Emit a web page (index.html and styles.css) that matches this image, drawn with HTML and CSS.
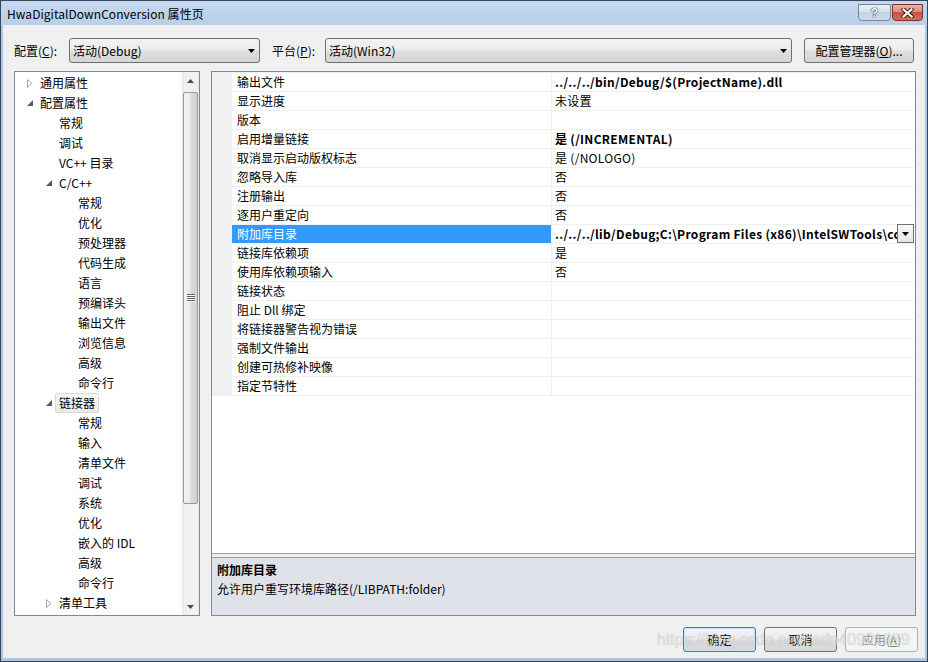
FILE: index.html
```html
<!DOCTYPE html>
<html lang="zh-CN">
<head>
<meta charset="utf-8">
<title>HwaDigitalDownConversion 属性页</title>
<link rel="stylesheet" href="styles.css">
</head>
<body>
<div class="window">
  <div class="titlebar">
    <span class="title">HwaDigitalDownConversion 属性页</span>
    <div class="tbtns">
      <div class="tb help"><span>?</span></div>
      <div class="tb close">
        <svg width="13" height="10" viewBox="0 0 13 10"><path d="M2.5 1.5 L10.5 8.5 M10.5 1.5 L2.5 8.5" stroke="#4b1c16" stroke-width="4.2" stroke-linecap="square" fill="none"/><path d="M2.5 1.5 L10.5 8.5 M10.5 1.5 L2.5 8.5" stroke="#ffffff" stroke-width="2.2" stroke-linecap="square" fill="none"/></svg>
      </div>
    </div>
  </div>
  <div class="client">
    <div class="toolbar">
      <span class="lbl lbl1">配置(<u>C</u>):</span>
      <div class="combo c1"><span class="ctext">活动(Debug)</span><svg class="dd" width="7" height="4" viewBox="0 0 7 4"><path d="M0 0H7L3.5 4Z" fill="#000"/></svg></div>
      <span class="lbl lbl2">平台(<u>P</u>):</span>
      <div class="combo c2"><span class="ctext">活动(Win32)</span><svg class="dd" width="7" height="4" viewBox="0 0 7 4"><path d="M0 0H7L3.5 4Z" fill="#000"/></svg></div>
      <div class="btn cfg">配置管理器(<u>O</u>)...</div>
    </div>
    <div class="main">
      <div class="tree">
        <div class="tree-items">
          <div class="ti l0"><span class="tg"><svg width="6" height="9" viewBox="0 0 6 9"><path d="M0.5 0.5 L5 4.5 L0.5 8.5 Z" fill="#fff" stroke="#a6a6a6"/></svg></span><span class="tx">通用属性</span></div>
          <div class="ti l0"><span class="tg"><svg width="6" height="6" viewBox="0 0 6 6"><path d="M6 0 L6 6 L0 6 Z" fill="#595959"/></svg></span><span class="tx">配置属性</span></div>
          <div class="ti l1"><span class="tg"></span><span class="tx">常规</span></div>
          <div class="ti l1"><span class="tg"></span><span class="tx">调试</span></div>
          <div class="ti l1"><span class="tg"></span><span class="tx">VC++ 目录</span></div>
          <div class="ti l1"><span class="tg"><svg width="6" height="6" viewBox="0 0 6 6"><path d="M6 0 L6 6 L0 6 Z" fill="#595959"/></svg></span><span class="tx">C/C++</span></div>
          <div class="ti l2"><span class="tg"></span><span class="tx">常规</span></div>
          <div class="ti l2"><span class="tg"></span><span class="tx">优化</span></div>
          <div class="ti l2"><span class="tg"></span><span class="tx">预处理器</span></div>
          <div class="ti l2"><span class="tg"></span><span class="tx">代码生成</span></div>
          <div class="ti l2"><span class="tg"></span><span class="tx">语言</span></div>
          <div class="ti l2"><span class="tg"></span><span class="tx">预编译头</span></div>
          <div class="ti l2"><span class="tg"></span><span class="tx">输出文件</span></div>
          <div class="ti l2"><span class="tg"></span><span class="tx">浏览信息</span></div>
          <div class="ti l2"><span class="tg"></span><span class="tx">高级</span></div>
          <div class="ti l2"><span class="tg"></span><span class="tx">命令行</span></div>
          <div class="ti l1"><span class="tg"><svg width="6" height="6" viewBox="0 0 6 6"><path d="M6 0 L6 6 L0 6 Z" fill="#595959"/></svg></span><span class="tx sel">链接器</span></div>
          <div class="ti l2"><span class="tg"></span><span class="tx">常规</span></div>
          <div class="ti l2"><span class="tg"></span><span class="tx">输入</span></div>
          <div class="ti l2"><span class="tg"></span><span class="tx">清单文件</span></div>
          <div class="ti l2"><span class="tg"></span><span class="tx">调试</span></div>
          <div class="ti l2"><span class="tg"></span><span class="tx">系统</span></div>
          <div class="ti l2"><span class="tg"></span><span class="tx">优化</span></div>
          <div class="ti l2"><span class="tg"></span><span class="tx">嵌入的 IDL</span></div>
          <div class="ti l2"><span class="tg"></span><span class="tx">高级</span></div>
          <div class="ti l2"><span class="tg"></span><span class="tx">命令行</span></div>
          <div class="ti l1"><span class="tg"><svg width="6" height="9" viewBox="0 0 6 9"><path d="M0.5 0.5 L5 4.5 L0.5 8.5 Z" fill="#fff" stroke="#a6a6a6"/></svg></span><span class="tx">清单工具</span></div>
        </div>
        <div class="vscroll">
          <div class="sb-btn"><svg width="7" height="4" viewBox="0 0 7 4"><path d="M0 4H7L3.5 0Z" fill="#4a4a4a"/></svg></div>
          <div class="sb-track">
            <div class="thumb">
              <svg width="8" height="8" viewBox="0 0 8 8"><path d="M0 0.5H8M0 2.5H8M0 4.5H8M0 6.5H8" stroke="#5f5f5f" stroke-width="1"/><path d="M0 1.5H8M0 3.5H8M0 5.5H8M0 7.5H8" stroke="#ffffff" stroke-width="1"/></svg>
            </div>
          </div>
          <div class="sb-btn"><svg width="7" height="4" viewBox="0 0 7 4"><path d="M0 0H7L3.5 4Z" fill="#4a4a4a"/></svg></div>
        </div>
      </div>
      <div class="props">
        <div class="grid">
          <div class="rows">
            <div class="row"><div class="gut"></div><div class="k">输出文件</div><div class="v b">../../../bin/Debug/$(ProjectName).dll</div></div>
            <div class="row"><div class="gut"></div><div class="k">显示进度</div><div class="v">未设置</div></div>
            <div class="row"><div class="gut"></div><div class="k">版本</div><div class="v"></div></div>
            <div class="row"><div class="gut"></div><div class="k">启用增量链接</div><div class="v b">是 (/INCREMENTAL)</div></div>
            <div class="row"><div class="gut"></div><div class="k">取消显示启动版权标志</div><div class="v">是 (/NOLOGO)</div></div>
            <div class="row"><div class="gut"></div><div class="k">忽略导入库</div><div class="v">否</div></div>
            <div class="row"><div class="gut"></div><div class="k">注册输出</div><div class="v">否</div></div>
            <div class="row"><div class="gut"></div><div class="k">逐用户重定向</div><div class="v">否</div></div>
            <div class="row selrow"><div class="gut"></div><div class="k">附加库目录</div><div class="v b vsel"><span class="vt">../../../lib/Debug;C:\Program Files (x86)\IntelSWTools\compilers_and_libraries\windows\ipp\lib\ia32</span><span class="vdd"><svg width="7" height="4" viewBox="0 0 7 4"><path d="M0 0H7L3.5 4Z" fill="#000"/></svg></span></div></div>
            <div class="row"><div class="gut"></div><div class="k">链接库依赖项</div><div class="v">是</div></div>
            <div class="row"><div class="gut"></div><div class="k">使用库依赖项输入</div><div class="v">否</div></div>
            <div class="row"><div class="gut"></div><div class="k">链接状态</div><div class="v"></div></div>
            <div class="row"><div class="gut"></div><div class="k">阻止 Dll 绑定</div><div class="v"></div></div>
            <div class="row"><div class="gut"></div><div class="k">将链接器警告视为错误</div><div class="v"></div></div>
            <div class="row"><div class="gut"></div><div class="k">强制文件输出</div><div class="v"></div></div>
            <div class="row"><div class="gut"></div><div class="k">创建可热修补映像</div><div class="v"></div></div>
            <div class="row"><div class="gut"></div><div class="k">指定节特性</div><div class="v"></div></div>
          </div>
        </div>
        <div class="splitter"></div>
        <div class="desc">
          <div class="dt">附加库目录</div>
          <div class="dd-text">允许用户重写环境库路径(/LIBPATH:folder)</div>
        </div>
      </div>
    </div>
    <div class="footer">
      <div class="btn fb ok">确定</div>
      <div class="btn fb">取消</div>
      <div class="btn fb dis">应用(<u>A</u>)</div>
    </div>
  </div>
  <div class="watermark">https://blog.csdn.net/csdn40991989</div>
</div>
</body>
</html>
```

FILE: styles.css
```css
html, body {
  margin: 0;
  padding: 0;
  background: #ffffff;
}
body {
  font-family: "Noto Sans CJK SC", "Noto Sans", sans-serif;
  font-size: 12px;
  color: #000;
}
.window {
  position: relative;
  width: 928px;
  height: 662px;
  box-sizing: border-box;
  border: 1px solid #37475a;
  background: #a9c7e8;
  padding: 0 2px 3px 2px;
  display: flex;
  flex-direction: column;
}
.titlebar {
  height: 24px;
  margin: 0 -2px;
  padding: 0 2px;
  display: flex;
  align-items: flex-start;
  background: linear-gradient(#c6d9f0, #bcd2ec 60%, #b9cfea);
}
.title {
  padding-left: 4px;
  padding-top: 4px;
  line-height: 17px;
  white-space: nowrap;
  letter-spacing: 0.05px;
  color: #000;
}
.tbtns {
  margin-left: auto;
  margin-right: 2px;
  margin-top: 3px;
  display: flex;
  gap: 1px;
}
.tb {
  height: 17px;
  box-sizing: border-box;
  display: flex;
  align-items: center;
  justify-content: center;
  border-radius: 0 0 4px 4px;
}
.help {
  width: 33px;
  border: 1px solid #75869b;
  background: linear-gradient(#e7eef7, #d6e2f0 45%, #c3d3e6 50%, #cddbeb);
}
.help span {
  font-family: "Liberation Sans", sans-serif;
  font-weight: bold;
  font-size: 13px;
  line-height: 13px;
  color: #ffffff;
  text-shadow: 0 0 1px #2a3340, 0 0 1px #2a3340, 0 0 1px #2a3340;
}
.close {
  width: 31px;
  border: 1px solid #7b3128;
  background: linear-gradient(#ebb3a9, #da8a7b 45%, #c7533f 50%, #d07060);
}
.client {
  flex: 1;
  background: #f0f0f0;
  padding: 13px 9px 6px 11px;
  display: flex;
  flex-direction: column;
  min-height: 0;
}
.toolbar {
  height: 25px;
  display: flex;
  align-items: center;
}
.lbl {
  white-space: nowrap;
}
.lbl1 { width: 55px; }
.lbl2 { width: 53px; margin-left: 12px; }
.combo {
  height: 25px;
  box-sizing: border-box;
  border: 1px solid #707070;
  border-radius: 3px;
  background: linear-gradient(#f3f3f3, #ececec 48%, #dedede 52%, #d6d6d6);
  display: flex;
  align-items: center;
  padding: 0 4px 0 3px;
}
.c1 { width: 191px; }
.c2 { width: 467px; }
.ctext { flex: 1; white-space: nowrap; }
.dd { flex: none; }
.btn {
  height: 25px;
  box-sizing: border-box;
  border: 1px solid #707070;
  border-radius: 3px;
  background: linear-gradient(#f3f3f3, #ececec 48%, #dedede 52%, #d6d6d6);
  display: flex;
  align-items: center;
  justify-content: center;
  white-space: nowrap;
}
.cfg {
  width: 110px;
  margin-left: 12px;
}
.main {
  margin-top: 8px;
  height: 545px;
  display: flex;
  gap: 11px;
}
.tree {
  width: 186px;
  box-sizing: border-box;
  border: 1px solid #828790;
  background: #ffffff;
  display: flex;
}
.tree-items {
  flex: 1;
  padding-top: 1px;
  overflow: hidden;
}
.ti {
  height: 20px;
  display: flex;
  align-items: center;
  white-space: nowrap;
}
.l0 { padding-left: 10px; }
.l1 { padding-left: 29px; }
.l2 { padding-left: 48px; }
.tg {
  width: 11px;
  flex: none;
  display: flex;
  align-items: center;
}
.tg svg { margin-left: 2px; }
.tx {
  padding: 0 3px;
  border: 1px solid transparent;
  border-radius: 2px;
  line-height: 18px;
}
.tx.sel {
  border-color: #d9d9d9;
  background: linear-gradient(#f8f8f8, #e9e9e9);
}
.vscroll {
  width: 17px;
  flex: none;
  display: flex;
  flex-direction: column;
  background: linear-gradient(to right, #e3e3e3, #f1f1f1 2px, #f1f1f1 15px, #e9e9e9);
}
.sb-btn {
  height: 17px;
  display: flex;
  align-items: center;
  justify-content: center;
}
.sb-track {
  flex: 1;
  padding-top: 3px;
}
.thumb {
  margin-left: 1px;
  width: 15px;
  height: 412px;
  box-sizing: border-box;
  border: 1px solid #979797;
  border-radius: 2px;
  background: linear-gradient(to right, #f4f4f4, #e9e9e9 45%, #dadada 55%, #d2d2d2);
  display: flex;
  align-items: center;
  justify-content: center;
}
.props {
  width: 705px;
  box-sizing: border-box;
  border: 1px solid #828790;
  display: flex;
  flex-direction: column;
}
.grid {
  height: 482px;
  box-sizing: border-box;
  border-bottom: 1px solid #a0a0a0;
  background: #ffffff;
}
.rows {
  border-top: 1px solid #f0f0f0;
}
.row {
  height: 19px;
  box-sizing: border-box;
  border-bottom: 1px solid #f0f0f0;
  display: flex;
  line-height: 18px;
}
.gut {
  width: 20px;
  flex: none;
  background: #f0f0f0;
}
.k {
  width: 320px;
  flex: none;
  box-sizing: border-box;
  border-right: 1px solid #f0f0f0;
  padding-left: 5px;
  white-space: nowrap;
  overflow: hidden;
}
.v {
  flex: 1;
  min-width: 0;
  padding-left: 3px;
  white-space: nowrap;
  overflow: hidden;
  letter-spacing: 0.3px;
}
.b { font-weight: bold; }
.selrow .k {
  background: #3399ff;
  color: #ffffff;
}
.vsel {
  display: flex;
  overflow: visible;
  padding-right: 1px;
}
.vt {
  flex: 1;
  min-width: 0;
  overflow: hidden;
}
.vdd {
  width: 17px;
  height: 19px;
  margin-top: -1px;
  flex: none;
  box-sizing: border-box;
  border: 1px solid #707070;
  background: linear-gradient(#f7f7f7, #e6e6e6);
  display: flex;
  align-items: center;
  justify-content: center;
}
.splitter {
  height: 3px;
  background: #f0f0f0;
}
.desc {
  flex: 1;
  border-top: 1px solid #a0a0a0;
  background: #dfe2e9;
  padding: 2px 5px;
  line-height: 19px;
}
.dt { font-weight: bold; }
.footer {
  margin-top: 11px;
  margin-right: -2px;
  height: 25px;
  display: flex;
  justify-content: flex-end;
  gap: 8px;
}
.fb { width: 73px; }
.ok {
  border-color: #3c7fb1;
  box-shadow: inset 0 0 0 1px #bfe6fa;
}
.dis {
  border-color: #adb2b5;
  background: #f4f4f4;
  color: #838383;
}
.watermark {
  position: absolute;
  left: 656px;
  top: 630px;
  font-family: "Liberation Sans", sans-serif;
  font-size: 16px;
  color: rgba(255, 255, 255, 0.55);
  text-shadow: 0 0 1px rgba(90, 90, 90, 0.4);
  white-space: nowrap;
  pointer-events: none;
}
```
